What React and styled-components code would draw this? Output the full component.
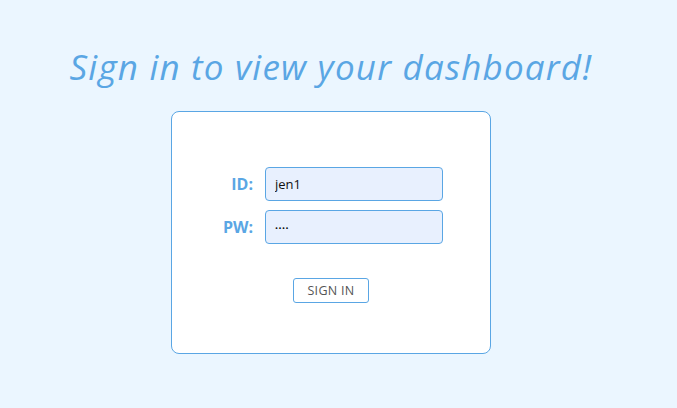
import React, { useState } from "react";
import styled, { createGlobalStyle } from "styled-components";

const GlobalStyle = createGlobalStyle`
  html, body {
    margin: 0;
    padding: 0;
    background: #ebf6ff;
    font-family: "Open Sans", "Liberation Sans", sans-serif;
  }
`;

const Page = styled.main`
  width: 662px;
  height: 408px;
  display: flex;
  flex-direction: column;
  align-items: center;
  box-sizing: border-box;
  padding-top: 42px;
`;

const Title = styled.h1`
  margin: 0;
  font-size: 35px;
  font-weight: 500;
  font-style: italic;
  color: #5aa6e4;
  letter-spacing: 1.2px;
  line-height: 50px;
`;

const Card = styled.form`
  margin-top: 19px;
  width: 320px;
  height: 243px;
  box-sizing: border-box;
  background: #ffffff;
  border: 1px solid #5aa6e4;
  border-radius: 8px;
  display: flex;
  flex-direction: column;
  align-items: center;
  padding-top: 55px;
`;

const Row = styled.div`
  display: flex;
  align-items: center;
  gap: 12px;
  margin-bottom: 9px;
`;

const Label = styled.label`
  width: 34px;
  text-align: right;
  font-size: 16px;
  font-weight: 700;
  color: #5aa6e4;
`;

const Input = styled.input`
  width: 178px;
  height: 34px;
  box-sizing: border-box;
  padding: 0 9px;
  border: 1px solid #5aa6e4;
  border-radius: 4px;
  background: #e8f0fe;
  font-family: "Open Sans", "Liberation Sans", sans-serif;
  font-size: ${(p) => (p.type === "password" ? "8px" : "13px")};
  letter-spacing: ${(p) => (p.type === "password" ? "0.5px" : "0")};
  color: #111;
  outline: none;
`;

const Button = styled.button`
  margin-top: 25px;
  width: 76px;
  height: 25px;
  box-sizing: border-box;
  background: #fff;
  border: 1px solid #5aa6e4;
  border-radius: 3px;
  font-family: "Open Sans", "Liberation Sans", sans-serif;
  font-size: 12.5px;
  color: #555;
  letter-spacing: 0.3px;
  cursor: pointer;
`;

export default function App() {
  const [id, setId] = useState("jen1");
  const [pw, setPw] = useState("jen1");

  return (
    <>
      <GlobalStyle />
      <Page>
        <Title>Sign in to view your dashboard!</Title>
        <Card onSubmit={(e) => e.preventDefault()}>
          <Row>
            <Label htmlFor="id">ID:</Label>
            <Input id="id" value={id} onChange={(e) => setId(e.target.value)} />
          </Row>
          <Row>
            <Label htmlFor="pw">PW:</Label>
            <Input
              id="pw"
              type="password"
              value={pw}
              onChange={(e) => setPw(e.target.value)}
            />
          </Row>
          <Button type="submit">SIGN IN</Button>
        </Card>
      </Page>
    </>
  );
}
